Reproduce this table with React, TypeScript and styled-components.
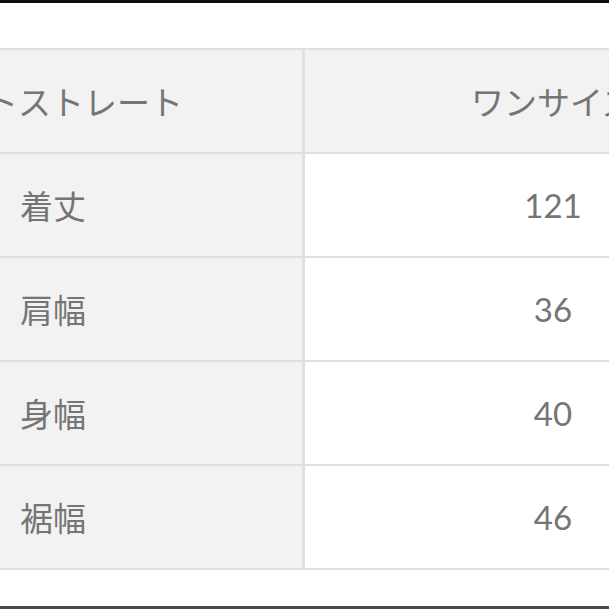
import React from "react";
import styled, { createGlobalStyle } from "styled-components";

const Global = createGlobalStyle`
  html, body { margin: 0; padding: 0; background: #ffffff; overflow: hidden; }
`;

const Frame = styled.div`
  width: 609px;
  height: 609px;
  box-sizing: border-box;
  border-top: 3px solid #0d0d0d;
  border-bottom: 3px solid #4a4a4a;
  padding-top: 45px;
  overflow: hidden;
  background: #ffffff;
`;

const Table = styled.div`
  width: 801px;
  display: flex;
  flex-direction: column;
  border-top: 2px solid #dedfe0;
  font-family: Lato, "Noto Sans CJK JP", sans-serif;
  color: #757575;
  font-size: 33px;
`;

const Row = styled.div`
  display: grid;
  grid-template-columns: 302px 1fr;
  column-gap: 3px;
  height: 102px;
  background: #dfe1e3;
  border-bottom: 2px solid #dedfe0;
`;

const LabelCell = styled.div<{ $head?: boolean }>`
  background: #f2f2f2;
  display: flex;
  align-items: center;
  justify-content: ${(p) => (p.$head ? "flex-end" : "flex-start")};
  padding: ${(p) => (p.$head ? "0 119px 0 0" : "0 0 0 20px")};
  white-space: nowrap;
  overflow: hidden;
`;

const ValueCell = styled.div<{ $head?: boolean }>`
  background: ${(p) => (p.$head ? "#f2f2f2" : "#ffffff")};
  display: flex;
  align-items: center;
  justify-content: center;
  white-space: nowrap;
`;

const rows = [
  ["着丈", "121"],
  ["肩幅", "36"],
  ["身幅", "40"],
  ["裾幅", "46"],
];

export default function App() {
  return (
    <>
      <Global />
      <Frame>
        <Table>
          <Row>
            <LabelCell $head>ハイウエストストレート</LabelCell>
            <ValueCell $head>ワンサイズ</ValueCell>
          </Row>
          {rows.map(([k, v]) => (
            <Row key={k}>
              <LabelCell>{k}</LabelCell>
              <ValueCell>{v}</ValueCell>
            </Row>
          ))}
        </Table>
      </Frame>
    </>
  );
}
